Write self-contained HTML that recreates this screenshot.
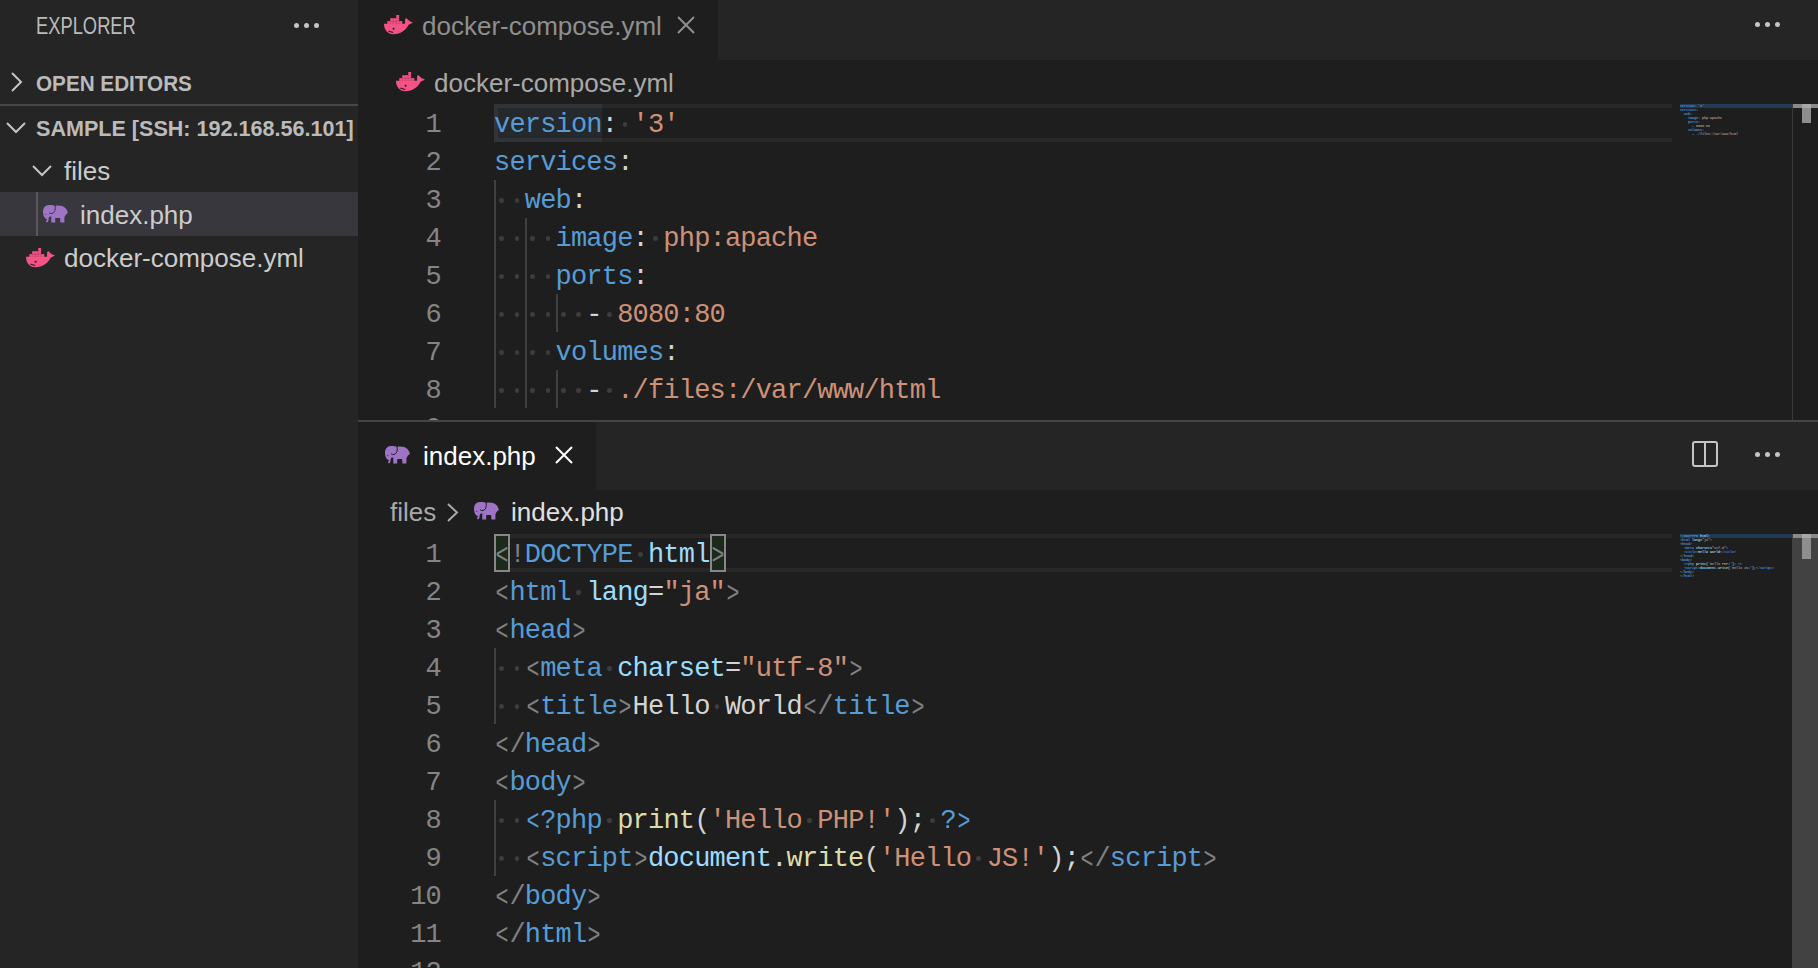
<!DOCTYPE html><html><head><meta charset="utf-8"><style>
html,body{margin:0;padding:0;}
body{width:1818px;height:968px;overflow:hidden;background:#1e1e1e;position:relative;font-family:"Liberation Sans",sans-serif;}
.t{position:absolute;white-space:pre;}
.r{position:absolute;}
.s{position:absolute;overflow:visible;}
.m{position:absolute;white-space:pre;font-family:"Liberation Mono",monospace;}
.b{display:inline-block;transform:translateY(1.8px) scale(0.8,1.1);transform-origin:50% 60%;}
</style></head><body>
<div class="r" style="left:0px;top:0px;width:358px;height:968px;background:#252526;"></div>
<div class="t" style="left:36px;top:15.25px;font-size:23.5px;line-height:23.5px;color:#bbbbbb;font-weight:normal;transform:scaleX(0.78);transform-origin:0 0;">EXPLORER</div>
<div class="r" style="left:293.70px;top:22.60px;width:5px;height:5px;border-radius:50%;background:#c5c5c5"></div>
<div class="r" style="left:303.70px;top:22.60px;width:5px;height:5px;border-radius:50%;background:#c5c5c5"></div>
<div class="r" style="left:313.70px;top:22.60px;width:5px;height:5px;border-radius:50%;background:#c5c5c5"></div>
<svg class="s" style="left:11px;top:72px" width="11" height="20" viewBox="0 0 11 20"><path d="M1.0 1.0 L10.0 10.0 L1.0 19.0" stroke="#c5c5c5" stroke-width="2" fill="none" stroke-linecap="butt" stroke-linejoin="miter"/></svg>
<div class="t" style="left:36px;top:72.5px;font-size:22px;line-height:22px;color:#bbbbbb;font-weight:bold;transform:scaleX(0.94);transform-origin:0 0;">OPEN EDITORS</div>
<div class="r" style="left:0px;top:104px;width:358px;height:2px;background:#474747;"></div>
<svg class="s" style="left:6px;top:122px" width="20" height="11" viewBox="0 0 20 11"><path d="M1.0 1.0 L10.0 10.0 L19.0 1.0" stroke="#c5c5c5" stroke-width="2" fill="none"/></svg>
<div class="t" style="left:36px;top:117.5px;font-size:22px;line-height:22px;color:#bbbbbb;font-weight:bold;transform:scaleX(0.98);transform-origin:0 0;">SAMPLE [SSH: 192.168.56.101]</div>
<svg class="s" style="left:32px;top:165px" width="20" height="11" viewBox="0 0 20 11"><path d="M1.0 1.0 L10.0 10.0 L19.0 1.0" stroke="#c5c5c5" stroke-width="2" fill="none"/></svg>
<div class="t" style="left:64px;top:158.0px;font-size:26px;line-height:26px;color:#cccccc;font-weight:normal;">files</div>
<div class="r" style="left:0px;top:192px;width:358px;height:44px;background:#37373d;"></div>
<div class="r" style="left:36px;top:192px;width:2px;height:44px;background:#585858;"></div>
<svg class="s" style="left:42.8px;top:204.5px" width="26" height="18" viewBox="0 0 26 18"><path fill="#a074c4" d="M4.3 0.3 C7.5 -0.2 10.5 0.3 11.8 0.9 L12.6 0.7 C16 0.2 20.5 0.8 22.6 3.2 C23.8 4.6 24.6 6.4 24.9 8.1 L23.2 9.2 C22.2 10.5 21.6 11.5 21.4 12.5 L21.4 17.6 L17.4 17.6 L17.1 13 L12.2 13 L12.2 17.6 L8.3 17.6 L8.3 11.6 C7.2 11.2 6.2 11.6 5.8 12.4 L5.6 14.5 C5.4 16 4.8 17.2 4 17.4 C3.3 17.2 2.8 16.4 3.1 15.6 C3.5 15.2 4 15 4.3 14.7 C2.2 13.8 0.8 12 0.4 10 C0 8.4 -0.1 6.5 0.1 5.2 C0.6 2.6 2.2 0.7 4.3 0.3 Z"/>
<path d="M12.2 0.6 C12.5 3 12.2 5.4 11.3 6.8 C10.2 8.6 8 9.2 6.1 7.8" stroke="#37373d" stroke-width="1" fill="none"/>
<circle cx="2.7" cy="9.4" r="0.6" fill="#37373d" fill-opacity="0.7"/></svg>
<div class="t" style="left:80px;top:202.0px;font-size:26px;line-height:26px;color:#cccccc;font-weight:normal;">index.php</div>
<svg class="s" style="left:25.5px;top:247.7px" width="30" height="20" viewBox="0 0 30 20"><g fill="#f55385">
<path d="M0 8.8 L21 8.8 L21.1 4.6 C21.3 3.7 22 3.2 22.8 3.4 L25.4 5.9 L29 7.6 L24.4 10 C21.8 15.4 16.6 19.2 9.3 19.2 C3.6 19.2 0 15 0 8.8 Z"/>
<rect x="3.3" y="6.1" width="15" height="2.8"/>
<rect x="6.2" y="3.2" width="9" height="3"/>
<rect x="12.3" y="0" width="2.9" height="3.3"/>
</g>
<g stroke="#000" stroke-opacity="0.22" stroke-width="0.6">
<path d="M6.2 6.1 V8.8 M9.1 3.2 V8.8 M12.2 3.2 V8.8 M15.2 0.2 V8.8 M6.2 6.1 H15.2"/>
</g>
<circle cx="9.6" cy="13.8" r="1" fill="#1e1e1e"/>
<path d="M4.4 15.9 C6 16.8 7.6 17 9.2 17.6" stroke="#1e1e1e" stroke-width="1.1" fill="none"/></svg>
<div class="t" style="left:64px;top:245.0px;font-size:26px;line-height:26px;color:#cccccc;font-weight:normal;">docker-compose.yml</div>
<div class="r" style="left:358px;top:0px;width:1460px;height:60px;background:#252526;"></div>
<div class="r" style="left:358px;top:0px;width:360px;height:60px;background:#1e1e1e;"></div>
<svg class="s" style="left:383.7px;top:14.8px" width="30" height="20" viewBox="0 0 30 20"><g fill="#f55385">
<path d="M0 8.8 L21 8.8 L21.1 4.6 C21.3 3.7 22 3.2 22.8 3.4 L25.4 5.9 L29 7.6 L24.4 10 C21.8 15.4 16.6 19.2 9.3 19.2 C3.6 19.2 0 15 0 8.8 Z"/>
<rect x="3.3" y="6.1" width="15" height="2.8"/>
<rect x="6.2" y="3.2" width="9" height="3"/>
<rect x="12.3" y="0" width="2.9" height="3.3"/>
</g>
<g stroke="#000" stroke-opacity="0.22" stroke-width="0.6">
<path d="M6.2 6.1 V8.8 M9.1 3.2 V8.8 M12.2 3.2 V8.8 M15.2 0.2 V8.8 M6.2 6.1 H15.2"/>
</g>
<circle cx="9.6" cy="13.8" r="1" fill="#1e1e1e"/>
<path d="M4.4 15.9 C6 16.8 7.6 17 9.2 17.6" stroke="#1e1e1e" stroke-width="1.1" fill="none"/></svg>
<div class="t" style="left:422px;top:12.5px;font-size:26px;line-height:26px;color:#8f8f8f;font-weight:normal;">docker-compose.yml</div>
<svg class="s" style="left:677px;top:16px" width="18" height="18" viewBox="0 0 18 18"><path d="M1 1 L17 17 M17 1 L1 17" stroke="#8f8f8f" stroke-width="2" fill="none"/></svg>
<div class="r" style="left:1755.04px;top:21.90px;width:5px;height:5px;border-radius:50%;background:#c5c5c5"></div>
<div class="r" style="left:1765.04px;top:21.90px;width:5px;height:5px;border-radius:50%;background:#c5c5c5"></div>
<div class="r" style="left:1775.04px;top:21.90px;width:5px;height:5px;border-radius:50%;background:#c5c5c5"></div>
<svg class="s" style="left:395.5px;top:72px" width="30" height="20" viewBox="0 0 30 20"><g fill="#f55385">
<path d="M0 8.8 L21 8.8 L21.1 4.6 C21.3 3.7 22 3.2 22.8 3.4 L25.4 5.9 L29 7.6 L24.4 10 C21.8 15.4 16.6 19.2 9.3 19.2 C3.6 19.2 0 15 0 8.8 Z"/>
<rect x="3.3" y="6.1" width="15" height="2.8"/>
<rect x="6.2" y="3.2" width="9" height="3"/>
<rect x="12.3" y="0" width="2.9" height="3.3"/>
</g>
<g stroke="#000" stroke-opacity="0.22" stroke-width="0.6">
<path d="M6.2 6.1 V8.8 M9.1 3.2 V8.8 M12.2 3.2 V8.8 M15.2 0.2 V8.8 M6.2 6.1 H15.2"/>
</g>
<circle cx="9.6" cy="13.8" r="1" fill="#1e1e1e"/>
<path d="M4.4 15.9 C6 16.8 7.6 17 9.2 17.6" stroke="#1e1e1e" stroke-width="1.1" fill="none"/></svg>
<div class="t" style="left:434px;top:69.5px;font-size:26px;line-height:26px;color:#a9a9a9;font-weight:normal;">docker-compose.yml</div>
<div class="r" style="left:358px;top:420px;width:1460px;height:2px;background:#444444;"></div>
<div class="r" style="left:358px;top:422px;width:1460px;height:68px;background:#252526;"></div>
<div class="r" style="left:358px;top:422px;width:238px;height:68px;background:#1e1e1e;"></div>
<svg class="s" style="left:385.2px;top:445.5px" width="26" height="18" viewBox="0 0 26 18"><path fill="#a074c4" d="M4.3 0.3 C7.5 -0.2 10.5 0.3 11.8 0.9 L12.6 0.7 C16 0.2 20.5 0.8 22.6 3.2 C23.8 4.6 24.6 6.4 24.9 8.1 L23.2 9.2 C22.2 10.5 21.6 11.5 21.4 12.5 L21.4 17.6 L17.4 17.6 L17.1 13 L12.2 13 L12.2 17.6 L8.3 17.6 L8.3 11.6 C7.2 11.2 6.2 11.6 5.8 12.4 L5.6 14.5 C5.4 16 4.8 17.2 4 17.4 C3.3 17.2 2.8 16.4 3.1 15.6 C3.5 15.2 4 15 4.3 14.7 C2.2 13.8 0.8 12 0.4 10 C0 8.4 -0.1 6.5 0.1 5.2 C0.6 2.6 2.2 0.7 4.3 0.3 Z"/>
<path d="M12.2 0.6 C12.5 3 12.2 5.4 11.3 6.8 C10.2 8.6 8 9.2 6.1 7.8" stroke="#1e1e1e" stroke-width="1" fill="none"/>
<circle cx="2.7" cy="9.4" r="0.6" fill="#1e1e1e" fill-opacity="0.7"/></svg>
<div class="t" style="left:423px;top:442.5px;font-size:26px;line-height:26px;color:#ffffff;font-weight:normal;">index.php</div>
<svg class="s" style="left:555px;top:446px" width="18" height="18" viewBox="0 0 18 18"><path d="M1 1 L17 17 M17 1 L1 17" stroke="#ffffff" stroke-width="2" fill="none"/></svg>
<svg class="s" style="left:1692px;top:441px" width="26" height="26" viewBox="0 0 26 26"><rect x="1" y="1" width="24" height="24" rx="2" stroke="#c5c5c5" stroke-width="2" fill="none"/><path d="M13 1 V25" stroke="#c5c5c5" stroke-width="2"/></svg>
<div class="r" style="left:1755.14px;top:452.14px;width:5px;height:5px;border-radius:50%;background:#c5c5c5"></div>
<div class="r" style="left:1765.14px;top:452.14px;width:5px;height:5px;border-radius:50%;background:#c5c5c5"></div>
<div class="r" style="left:1775.14px;top:452.14px;width:5px;height:5px;border-radius:50%;background:#c5c5c5"></div>
<div class="t" style="left:390px;top:499.4px;font-size:26px;line-height:26px;color:#a9a9a9;font-weight:normal;">files</div>
<svg class="s" style="left:447px;top:503px" width="11" height="19" viewBox="0 0 11 19"><path d="M1.0 1.0 L10.0 9.5 L1.0 18.0" stroke="#a9a9a9" stroke-width="2" fill="none" stroke-linecap="butt" stroke-linejoin="miter"/></svg>
<svg class="s" style="left:474.3px;top:502.4px" width="26" height="18" viewBox="0 0 26 18"><path fill="#a074c4" d="M4.3 0.3 C7.5 -0.2 10.5 0.3 11.8 0.9 L12.6 0.7 C16 0.2 20.5 0.8 22.6 3.2 C23.8 4.6 24.6 6.4 24.9 8.1 L23.2 9.2 C22.2 10.5 21.6 11.5 21.4 12.5 L21.4 17.6 L17.4 17.6 L17.1 13 L12.2 13 L12.2 17.6 L8.3 17.6 L8.3 11.6 C7.2 11.2 6.2 11.6 5.8 12.4 L5.6 14.5 C5.4 16 4.8 17.2 4 17.4 C3.3 17.2 2.8 16.4 3.1 15.6 C3.5 15.2 4 15 4.3 14.7 C2.2 13.8 0.8 12 0.4 10 C0 8.4 -0.1 6.5 0.1 5.2 C0.6 2.6 2.2 0.7 4.3 0.3 Z"/>
<path d="M12.2 0.6 C12.5 3 12.2 5.4 11.3 6.8 C10.2 8.6 8 9.2 6.1 7.8" stroke="#1e1e1e" stroke-width="1" fill="none"/>
<circle cx="2.7" cy="9.4" r="0.6" fill="#1e1e1e" fill-opacity="0.7"/></svg>
<div class="t" style="left:511px;top:499.4px;font-size:26px;line-height:26px;color:#e0e0e0;font-weight:normal;">index.php</div>
<div style="position:absolute;left:358px;top:104px;width:1460px;height:316px;overflow:hidden"><div style="position:absolute;left:-358px;top:-104px;width:1818px;height:968px">
<div class="r" style="left:494px;top:104px;width:1178px;height:38px;background:transparent;box-sizing:border-box;border:4px solid #282828;border-right:none"></div>
<div class="r" style="left:494px;top:104px;width:108px;height:38px;background:#31353a;"></div>
<div class="r" style="left:498px;top:108px;width:104px;height:30px;background:#26292c;"></div>
<div class="r" style="left:494px;top:180px;width:2px;height:228px;background:#404040;"></div>
<div class="r" style="left:525px;top:218px;width:2px;height:190px;background:#404040;"></div>
<div class="r" style="left:556px;top:294px;width:2px;height:38px;background:#404040;"></div>
<div class="r" style="left:556px;top:370px;width:2px;height:38px;background:#404040;"></div>
<div class="m" style="left:425.61px;top:106.0px;font-size:27px;line-height:38px;letter-spacing:-0.810px;color:#858585">1</div>
<div class="m" style="left:494px;top:106.0px;font-size:27px;line-height:38px;letter-spacing:-0.810px"><span style="color:#569cd6">version</span><span style="color:#d4d4d4">:</span><span style="color:#d4d4d4"> </span><span style="color:#ce9178">'3'</span></div>
<div class="r" style="left:622.52px;top:122.30px;width:4.6px;height:4.6px;border-radius:50%;background:#3d3d3d"></div>
<div class="m" style="left:425.61px;top:144.0px;font-size:27px;line-height:38px;letter-spacing:-0.810px;color:#858585">2</div>
<div class="m" style="left:494px;top:144.0px;font-size:27px;line-height:38px;letter-spacing:-0.810px"><span style="color:#569cd6">services</span><span style="color:#d4d4d4">:</span></div>
<div class="m" style="left:425.61px;top:182.0px;font-size:27px;line-height:38px;letter-spacing:-0.810px;color:#858585">3</div>
<div class="m" style="left:494px;top:182.0px;font-size:27px;line-height:38px;letter-spacing:-0.810px"><span style="color:#d4d4d4">  </span><span style="color:#569cd6">web</span><span style="color:#d4d4d4">:</span></div>
<div class="r" style="left:499.39px;top:198.30px;width:4.6px;height:4.6px;border-radius:50%;background:#3d3d3d"></div>
<div class="r" style="left:514.79px;top:198.30px;width:4.6px;height:4.6px;border-radius:50%;background:#3d3d3d"></div>
<div class="m" style="left:425.61px;top:220.0px;font-size:27px;line-height:38px;letter-spacing:-0.810px;color:#858585">4</div>
<div class="m" style="left:494px;top:220.0px;font-size:27px;line-height:38px;letter-spacing:-0.810px"><span style="color:#d4d4d4">    </span><span style="color:#569cd6">image</span><span style="color:#d4d4d4">:</span><span style="color:#d4d4d4"> </span><span style="color:#ce9178">php:apache</span></div>
<div class="r" style="left:499.39px;top:236.30px;width:4.6px;height:4.6px;border-radius:50%;background:#3d3d3d"></div>
<div class="r" style="left:514.79px;top:236.30px;width:4.6px;height:4.6px;border-radius:50%;background:#3d3d3d"></div>
<div class="r" style="left:530.18px;top:236.30px;width:4.6px;height:4.6px;border-radius:50%;background:#3d3d3d"></div>
<div class="r" style="left:545.57px;top:236.30px;width:4.6px;height:4.6px;border-radius:50%;background:#3d3d3d"></div>
<div class="r" style="left:653.30px;top:236.30px;width:4.6px;height:4.6px;border-radius:50%;background:#3d3d3d"></div>
<div class="m" style="left:425.61px;top:258.0px;font-size:27px;line-height:38px;letter-spacing:-0.810px;color:#858585">5</div>
<div class="m" style="left:494px;top:258.0px;font-size:27px;line-height:38px;letter-spacing:-0.810px"><span style="color:#d4d4d4">    </span><span style="color:#569cd6">ports</span><span style="color:#d4d4d4">:</span></div>
<div class="r" style="left:499.39px;top:274.30px;width:4.6px;height:4.6px;border-radius:50%;background:#3d3d3d"></div>
<div class="r" style="left:514.79px;top:274.30px;width:4.6px;height:4.6px;border-radius:50%;background:#3d3d3d"></div>
<div class="r" style="left:530.18px;top:274.30px;width:4.6px;height:4.6px;border-radius:50%;background:#3d3d3d"></div>
<div class="r" style="left:545.57px;top:274.30px;width:4.6px;height:4.6px;border-radius:50%;background:#3d3d3d"></div>
<div class="m" style="left:425.61px;top:296.0px;font-size:27px;line-height:38px;letter-spacing:-0.810px;color:#858585">6</div>
<div class="m" style="left:494px;top:296.0px;font-size:27px;line-height:38px;letter-spacing:-0.810px"><span style="color:#d4d4d4">      </span><span style="color:#d4d4d4">-</span><span style="color:#d4d4d4"> </span><span style="color:#ce9178">8080:80</span></div>
<div class="r" style="left:499.39px;top:312.30px;width:4.6px;height:4.6px;border-radius:50%;background:#3d3d3d"></div>
<div class="r" style="left:514.79px;top:312.30px;width:4.6px;height:4.6px;border-radius:50%;background:#3d3d3d"></div>
<div class="r" style="left:530.18px;top:312.30px;width:4.6px;height:4.6px;border-radius:50%;background:#3d3d3d"></div>
<div class="r" style="left:545.57px;top:312.30px;width:4.6px;height:4.6px;border-radius:50%;background:#3d3d3d"></div>
<div class="r" style="left:560.96px;top:312.30px;width:4.6px;height:4.6px;border-radius:50%;background:#3d3d3d"></div>
<div class="r" style="left:576.35px;top:312.30px;width:4.6px;height:4.6px;border-radius:50%;background:#3d3d3d"></div>
<div class="r" style="left:607.13px;top:312.30px;width:4.6px;height:4.6px;border-radius:50%;background:#3d3d3d"></div>
<div class="m" style="left:425.61px;top:334.0px;font-size:27px;line-height:38px;letter-spacing:-0.810px;color:#858585">7</div>
<div class="m" style="left:494px;top:334.0px;font-size:27px;line-height:38px;letter-spacing:-0.810px"><span style="color:#d4d4d4">    </span><span style="color:#569cd6">volumes</span><span style="color:#d4d4d4">:</span></div>
<div class="r" style="left:499.39px;top:350.30px;width:4.6px;height:4.6px;border-radius:50%;background:#3d3d3d"></div>
<div class="r" style="left:514.79px;top:350.30px;width:4.6px;height:4.6px;border-radius:50%;background:#3d3d3d"></div>
<div class="r" style="left:530.18px;top:350.30px;width:4.6px;height:4.6px;border-radius:50%;background:#3d3d3d"></div>
<div class="r" style="left:545.57px;top:350.30px;width:4.6px;height:4.6px;border-radius:50%;background:#3d3d3d"></div>
<div class="m" style="left:425.61px;top:372.0px;font-size:27px;line-height:38px;letter-spacing:-0.810px;color:#858585">8</div>
<div class="m" style="left:494px;top:372.0px;font-size:27px;line-height:38px;letter-spacing:-0.810px"><span style="color:#d4d4d4">      </span><span style="color:#d4d4d4">-</span><span style="color:#d4d4d4"> </span><span style="color:#ce9178">./files:/var/www/html</span></div>
<div class="r" style="left:499.39px;top:388.30px;width:4.6px;height:4.6px;border-radius:50%;background:#3d3d3d"></div>
<div class="r" style="left:514.79px;top:388.30px;width:4.6px;height:4.6px;border-radius:50%;background:#3d3d3d"></div>
<div class="r" style="left:530.18px;top:388.30px;width:4.6px;height:4.6px;border-radius:50%;background:#3d3d3d"></div>
<div class="r" style="left:545.57px;top:388.30px;width:4.6px;height:4.6px;border-radius:50%;background:#3d3d3d"></div>
<div class="r" style="left:560.96px;top:388.30px;width:4.6px;height:4.6px;border-radius:50%;background:#3d3d3d"></div>
<div class="r" style="left:576.35px;top:388.30px;width:4.6px;height:4.6px;border-radius:50%;background:#3d3d3d"></div>
<div class="r" style="left:607.13px;top:388.30px;width:4.6px;height:4.6px;border-radius:50%;background:#3d3d3d"></div>
<div class="m" style="left:425.61px;top:410.0px;font-size:27px;line-height:38px;letter-spacing:-0.810px;color:#858585">9</div>
<div class="r" style="left:1680px;top:104px;width:112px;height:4px;background:#223a54;"></div>
<div class="m" style="left:1680px;top:104px;font-size:3.3333px;line-height:4px;font-weight:bold;opacity:0.9"><span style="color:#569cd6">version</span><span style="color:#d4d4d4">:</span><span style="color:#d4d4d4"> </span><span style="color:#ce9178">'3'</span></div>
<div class="m" style="left:1680px;top:108px;font-size:3.3333px;line-height:4px;font-weight:bold;opacity:0.9"><span style="color:#569cd6">services</span><span style="color:#d4d4d4">:</span></div>
<div class="m" style="left:1680px;top:112px;font-size:3.3333px;line-height:4px;font-weight:bold;opacity:0.9"><span style="color:#d4d4d4">  </span><span style="color:#569cd6">web</span><span style="color:#d4d4d4">:</span></div>
<div class="m" style="left:1680px;top:116px;font-size:3.3333px;line-height:4px;font-weight:bold;opacity:0.9"><span style="color:#d4d4d4">    </span><span style="color:#569cd6">image</span><span style="color:#d4d4d4">:</span><span style="color:#d4d4d4"> </span><span style="color:#ce9178">php:apache</span></div>
<div class="m" style="left:1680px;top:120px;font-size:3.3333px;line-height:4px;font-weight:bold;opacity:0.9"><span style="color:#d4d4d4">    </span><span style="color:#569cd6">ports</span><span style="color:#d4d4d4">:</span></div>
<div class="m" style="left:1680px;top:124px;font-size:3.3333px;line-height:4px;font-weight:bold;opacity:0.9"><span style="color:#d4d4d4">      </span><span style="color:#d4d4d4">-</span><span style="color:#d4d4d4"> </span><span style="color:#ce9178">8080:80</span></div>
<div class="m" style="left:1680px;top:128px;font-size:3.3333px;line-height:4px;font-weight:bold;opacity:0.9"><span style="color:#d4d4d4">    </span><span style="color:#569cd6">volumes</span><span style="color:#d4d4d4">:</span></div>
<div class="m" style="left:1680px;top:132px;font-size:3.3333px;line-height:4px;font-weight:bold;opacity:0.9"><span style="color:#d4d4d4">      </span><span style="color:#d4d4d4">-</span><span style="color:#d4d4d4"> </span><span style="color:#ce9178">./files:/var/www/html</span></div>
<div class="r" style="left:1792px;top:104px;width:1px;height:316px;background:#3a3a3a;"></div>
<div class="r" style="left:1793px;top:104px;width:25px;height:4px;background:#8a8a8a;"></div>
<div class="r" style="left:1802px;top:104px;width:9px;height:19px;background:#8e8e8e;"></div>
<div class="r" style="left:1802px;top:104px;width:9px;height:4px;background:#a8a8a8;"></div>
</div></div>
<div style="position:absolute;left:358px;top:534px;width:1460px;height:434px;overflow:hidden"><div style="position:absolute;left:-358px;top:-534px;width:1818px;height:968px">
<div class="r" style="left:494px;top:534px;width:1178px;height:38px;background:transparent;box-sizing:border-box;border:4px solid #282828;border-right:none"></div>
<div class="r" style="left:494px;top:534px;width:16px;height:38px;background:#1c2a1c;box-sizing:border-box;border:2px solid #888888"></div>
<div class="r" style="left:709.5px;top:534px;width:16px;height:38px;background:#1c2a1c;box-sizing:border-box;border:2px solid #888888"></div>
<div class="r" style="left:494px;top:648px;width:2px;height:76px;background:#404040;"></div>
<div class="r" style="left:494px;top:800px;width:2px;height:76px;background:#404040;"></div>
<div class="m" style="left:425.61px;top:536.0px;font-size:27px;line-height:38px;letter-spacing:-0.810px;color:#858585">1</div>
<div class="m" style="left:494px;top:536.0px;font-size:27px;line-height:38px;letter-spacing:-0.810px"><span style="color:#808080"><span class="b">&lt;</span></span><span style="color:#808080">!</span><span style="color:#569cd6">DOCTYPE</span><span style="color:#d4d4d4"> </span><span style="color:#9cdcfe">html</span><span style="color:#808080"><span class="b">&gt;</span></span></div>
<div class="r" style="left:637.91px;top:552.30px;width:4.6px;height:4.6px;border-radius:50%;background:#3d3d3d"></div>
<div class="m" style="left:425.61px;top:574.0px;font-size:27px;line-height:38px;letter-spacing:-0.810px;color:#858585">2</div>
<div class="m" style="left:494px;top:574.0px;font-size:27px;line-height:38px;letter-spacing:-0.810px"><span style="color:#808080"><span class="b">&lt;</span></span><span style="color:#569cd6">html</span><span style="color:#d4d4d4"> </span><span style="color:#9cdcfe">lang</span><span style="color:#d4d4d4">=</span><span style="color:#ce9178">"ja"</span><span style="color:#808080"><span class="b">&gt;</span></span></div>
<div class="r" style="left:576.35px;top:590.30px;width:4.6px;height:4.6px;border-radius:50%;background:#3d3d3d"></div>
<div class="m" style="left:425.61px;top:612.0px;font-size:27px;line-height:38px;letter-spacing:-0.810px;color:#858585">3</div>
<div class="m" style="left:494px;top:612.0px;font-size:27px;line-height:38px;letter-spacing:-0.810px"><span style="color:#808080"><span class="b">&lt;</span></span><span style="color:#569cd6">head</span><span style="color:#808080"><span class="b">&gt;</span></span></div>
<div class="m" style="left:425.61px;top:650.0px;font-size:27px;line-height:38px;letter-spacing:-0.810px;color:#858585">4</div>
<div class="m" style="left:494px;top:650.0px;font-size:27px;line-height:38px;letter-spacing:-0.810px"><span style="color:#d4d4d4">  </span><span style="color:#808080"><span class="b">&lt;</span></span><span style="color:#569cd6">meta</span><span style="color:#d4d4d4"> </span><span style="color:#9cdcfe">charset</span><span style="color:#d4d4d4">=</span><span style="color:#ce9178">"utf-8"</span><span style="color:#808080"><span class="b">&gt;</span></span></div>
<div class="r" style="left:499.39px;top:666.30px;width:4.6px;height:4.6px;border-radius:50%;background:#3d3d3d"></div>
<div class="r" style="left:514.79px;top:666.30px;width:4.6px;height:4.6px;border-radius:50%;background:#3d3d3d"></div>
<div class="r" style="left:607.13px;top:666.30px;width:4.6px;height:4.6px;border-radius:50%;background:#3d3d3d"></div>
<div class="m" style="left:425.61px;top:688.0px;font-size:27px;line-height:38px;letter-spacing:-0.810px;color:#858585">5</div>
<div class="m" style="left:494px;top:688.0px;font-size:27px;line-height:38px;letter-spacing:-0.810px"><span style="color:#d4d4d4">  </span><span style="color:#808080"><span class="b">&lt;</span></span><span style="color:#569cd6">title</span><span style="color:#808080"><span class="b">&gt;</span></span><span style="color:#d4d4d4">Hello</span><span style="color:#d4d4d4"> </span><span style="color:#d4d4d4">World</span><span style="color:#808080"><span class="b">&lt;</span>/</span><span style="color:#569cd6">title</span><span style="color:#808080"><span class="b">&gt;</span></span></div>
<div class="r" style="left:499.39px;top:704.30px;width:4.6px;height:4.6px;border-radius:50%;background:#3d3d3d"></div>
<div class="r" style="left:514.79px;top:704.30px;width:4.6px;height:4.6px;border-radius:50%;background:#3d3d3d"></div>
<div class="r" style="left:714.86px;top:704.30px;width:4.6px;height:4.6px;border-radius:50%;background:#3d3d3d"></div>
<div class="m" style="left:425.61px;top:726.0px;font-size:27px;line-height:38px;letter-spacing:-0.810px;color:#858585">6</div>
<div class="m" style="left:494px;top:726.0px;font-size:27px;line-height:38px;letter-spacing:-0.810px"><span style="color:#808080"><span class="b">&lt;</span>/</span><span style="color:#569cd6">head</span><span style="color:#808080"><span class="b">&gt;</span></span></div>
<div class="m" style="left:425.61px;top:764.0px;font-size:27px;line-height:38px;letter-spacing:-0.810px;color:#858585">7</div>
<div class="m" style="left:494px;top:764.0px;font-size:27px;line-height:38px;letter-spacing:-0.810px"><span style="color:#808080"><span class="b">&lt;</span></span><span style="color:#569cd6">body</span><span style="color:#808080"><span class="b">&gt;</span></span></div>
<div class="m" style="left:425.61px;top:802.0px;font-size:27px;line-height:38px;letter-spacing:-0.810px;color:#858585">8</div>
<div class="m" style="left:494px;top:802.0px;font-size:27px;line-height:38px;letter-spacing:-0.810px"><span style="color:#d4d4d4">  </span><span style="color:#569cd6"><span class="b">&lt;</span>?</span><span style="color:#569cd6">php</span><span style="color:#d4d4d4"> </span><span style="color:#dcdcaa">print</span><span style="color:#d4d4d4">(</span><span style="color:#ce9178">'Hello</span><span style="color:#ce9178"> </span><span style="color:#ce9178">PHP!'</span><span style="color:#d4d4d4">);</span><span style="color:#d4d4d4"> </span><span style="color:#569cd6">?<span class="b">&gt;</span></span></div>
<div class="r" style="left:499.39px;top:818.30px;width:4.6px;height:4.6px;border-radius:50%;background:#3d3d3d"></div>
<div class="r" style="left:514.79px;top:818.30px;width:4.6px;height:4.6px;border-radius:50%;background:#3d3d3d"></div>
<div class="r" style="left:607.13px;top:818.30px;width:4.6px;height:4.6px;border-radius:50%;background:#3d3d3d"></div>
<div class="r" style="left:807.20px;top:818.30px;width:4.6px;height:4.6px;border-radius:50%;background:#3d3d3d"></div>
<div class="r" style="left:930.32px;top:818.30px;width:4.6px;height:4.6px;border-radius:50%;background:#3d3d3d"></div>
<div class="m" style="left:425.61px;top:840.0px;font-size:27px;line-height:38px;letter-spacing:-0.810px;color:#858585">9</div>
<div class="m" style="left:494px;top:840.0px;font-size:27px;line-height:38px;letter-spacing:-0.810px"><span style="color:#d4d4d4">  </span><span style="color:#808080"><span class="b">&lt;</span></span><span style="color:#569cd6">script</span><span style="color:#808080"><span class="b">&gt;</span></span><span style="color:#9cdcfe">document</span><span style="color:#d4d4d4">.</span><span style="color:#dcdcaa">write</span><span style="color:#d4d4d4">(</span><span style="color:#ce9178">'Hello</span><span style="color:#ce9178"> </span><span style="color:#ce9178">JS!'</span><span style="color:#d4d4d4">);</span><span style="color:#808080"><span class="b">&lt;</span>/</span><span style="color:#569cd6">script</span><span style="color:#808080"><span class="b">&gt;</span></span></div>
<div class="r" style="left:499.39px;top:856.30px;width:4.6px;height:4.6px;border-radius:50%;background:#3d3d3d"></div>
<div class="r" style="left:514.79px;top:856.30px;width:4.6px;height:4.6px;border-radius:50%;background:#3d3d3d"></div>
<div class="r" style="left:976.49px;top:856.30px;width:4.6px;height:4.6px;border-radius:50%;background:#3d3d3d"></div>
<div class="m" style="left:410.22px;top:878.0px;font-size:27px;line-height:38px;letter-spacing:-0.810px;color:#858585">10</div>
<div class="m" style="left:494px;top:878.0px;font-size:27px;line-height:38px;letter-spacing:-0.810px"><span style="color:#808080"><span class="b">&lt;</span>/</span><span style="color:#569cd6">body</span><span style="color:#808080"><span class="b">&gt;</span></span></div>
<div class="m" style="left:410.22px;top:916.0px;font-size:27px;line-height:38px;letter-spacing:-0.810px;color:#858585">11</div>
<div class="m" style="left:494px;top:916.0px;font-size:27px;line-height:38px;letter-spacing:-0.810px"><span style="color:#808080"><span class="b">&lt;</span>/</span><span style="color:#569cd6">html</span><span style="color:#808080"><span class="b">&gt;</span></span></div>
<div class="m" style="left:410.22px;top:954.0px;font-size:27px;line-height:38px;letter-spacing:-0.810px;color:#858585">12</div>
<div class="r" style="left:1680px;top:534px;width:112px;height:4px;background:#223a54;"></div>
<div class="m" style="left:1680px;top:534px;font-size:3.3333px;line-height:4px;font-weight:bold;opacity:0.9"><span style="color:#808080">&lt;</span><span style="color:#808080">!</span><span style="color:#569cd6">DOCTYPE</span><span style="color:#d4d4d4"> </span><span style="color:#9cdcfe">html</span><span style="color:#808080">&gt;</span></div>
<div class="m" style="left:1680px;top:538px;font-size:3.3333px;line-height:4px;font-weight:bold;opacity:0.9"><span style="color:#808080">&lt;</span><span style="color:#569cd6">html</span><span style="color:#d4d4d4"> </span><span style="color:#9cdcfe">lang</span><span style="color:#d4d4d4">=</span><span style="color:#ce9178">"ja"</span><span style="color:#808080">&gt;</span></div>
<div class="m" style="left:1680px;top:542px;font-size:3.3333px;line-height:4px;font-weight:bold;opacity:0.9"><span style="color:#808080">&lt;</span><span style="color:#569cd6">head</span><span style="color:#808080">&gt;</span></div>
<div class="m" style="left:1680px;top:546px;font-size:3.3333px;line-height:4px;font-weight:bold;opacity:0.9"><span style="color:#d4d4d4">  </span><span style="color:#808080">&lt;</span><span style="color:#569cd6">meta</span><span style="color:#d4d4d4"> </span><span style="color:#9cdcfe">charset</span><span style="color:#d4d4d4">=</span><span style="color:#ce9178">"utf-8"</span><span style="color:#808080">&gt;</span></div>
<div class="m" style="left:1680px;top:550px;font-size:3.3333px;line-height:4px;font-weight:bold;opacity:0.9"><span style="color:#d4d4d4">  </span><span style="color:#808080">&lt;</span><span style="color:#569cd6">title</span><span style="color:#808080">&gt;</span><span style="color:#d4d4d4">Hello</span><span style="color:#d4d4d4"> </span><span style="color:#d4d4d4">World</span><span style="color:#808080">&lt;/</span><span style="color:#569cd6">title</span><span style="color:#808080">&gt;</span></div>
<div class="m" style="left:1680px;top:554px;font-size:3.3333px;line-height:4px;font-weight:bold;opacity:0.9"><span style="color:#808080">&lt;/</span><span style="color:#569cd6">head</span><span style="color:#808080">&gt;</span></div>
<div class="m" style="left:1680px;top:558px;font-size:3.3333px;line-height:4px;font-weight:bold;opacity:0.9"><span style="color:#808080">&lt;</span><span style="color:#569cd6">body</span><span style="color:#808080">&gt;</span></div>
<div class="m" style="left:1680px;top:562px;font-size:3.3333px;line-height:4px;font-weight:bold;opacity:0.9"><span style="color:#d4d4d4">  </span><span style="color:#569cd6">&lt;?</span><span style="color:#569cd6">php</span><span style="color:#d4d4d4"> </span><span style="color:#dcdcaa">print</span><span style="color:#d4d4d4">(</span><span style="color:#ce9178">'Hello</span><span style="color:#ce9178"> </span><span style="color:#ce9178">PHP!'</span><span style="color:#d4d4d4">);</span><span style="color:#d4d4d4"> </span><span style="color:#569cd6">?&gt;</span></div>
<div class="m" style="left:1680px;top:566px;font-size:3.3333px;line-height:4px;font-weight:bold;opacity:0.9"><span style="color:#d4d4d4">  </span><span style="color:#808080">&lt;</span><span style="color:#569cd6">script</span><span style="color:#808080">&gt;</span><span style="color:#9cdcfe">document</span><span style="color:#d4d4d4">.</span><span style="color:#dcdcaa">write</span><span style="color:#d4d4d4">(</span><span style="color:#ce9178">'Hello</span><span style="color:#ce9178"> </span><span style="color:#ce9178">JS!'</span><span style="color:#d4d4d4">);</span><span style="color:#808080">&lt;/</span><span style="color:#569cd6">script</span><span style="color:#808080">&gt;</span></div>
<div class="m" style="left:1680px;top:570px;font-size:3.3333px;line-height:4px;font-weight:bold;opacity:0.9"><span style="color:#808080">&lt;/</span><span style="color:#569cd6">body</span><span style="color:#808080">&gt;</span></div>
<div class="m" style="left:1680px;top:574px;font-size:3.3333px;line-height:4px;font-weight:bold;opacity:0.9"><span style="color:#808080">&lt;/</span><span style="color:#569cd6">html</span><span style="color:#808080">&gt;</span></div>
<div class="r" style="left:1792px;top:534px;width:26px;height:434px;background:#424242;"></div>
<div class="r" style="left:1793px;top:534px;width:25px;height:4px;background:#8a8a8a;"></div>
<div class="r" style="left:1802px;top:534px;width:9px;height:25px;background:#8e8e8e;"></div>
<div class="r" style="left:1802px;top:534px;width:9px;height:4px;background:#a8a8a8;"></div>
</div></div>
</body></html>
